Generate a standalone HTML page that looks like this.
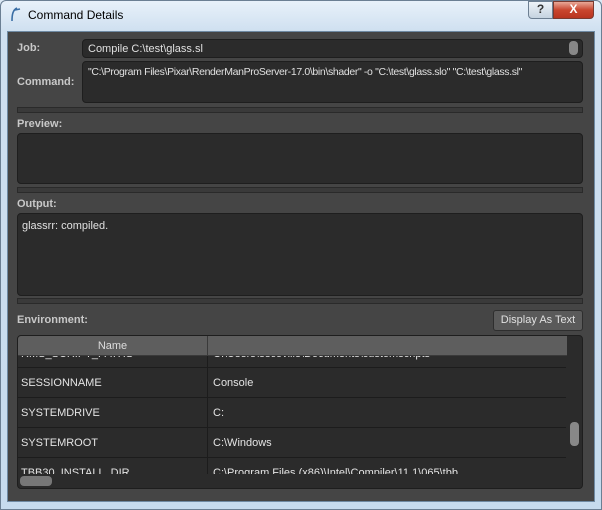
<!DOCTYPE html>
<html><head><style>
*{margin:0;padding:0;box-sizing:border-box}
body{width:602px;height:510px;overflow:hidden;background:#dce9f5;font-family:"Liberation Sans",sans-serif;font-size:11px;position:relative}
.frame{position:absolute;left:0;top:0;width:602px;height:510px;border:1px solid #6b7f93;border-radius:6px 6px 0 0;background:linear-gradient(#e8f1fa,#cfe0f0 30px,#c6dbee)}
.a{position:absolute}
.title{left:28px;top:8px;font-size:12px;color:#000}
.main{left:7px;top:31px;width:588px;height:471px;background:#454545;border:1px solid #6f8aa3}
.lbl{color:#c8c8c8;font-weight:bold;font-size:11px}
.box{background:#2b2b2b;border:1px solid #1e1e1e;border-radius:4px;color:#e0e0e0;font-size:11px;white-space:nowrap;overflow:hidden}
.spl{background:#3a3a3a;border:1px solid #2a2a2a;height:6px;left:17px;width:566px}
.row{left:0;width:548px;height:30px;border-bottom:1px solid #1c1c1c;color:#e4e4e4}
.row span{position:absolute;top:9px}
</style></head><body>
<div class="frame"></div>
<svg class="a" style="left:9px;top:6px" width="14" height="16"><path d="M3 15 C3 8 4 4 8 2 M6 4 L11 3" stroke="#3a6ea5" stroke-width="1.6" fill="none"/></svg>
<div class="a title">Command Details</div>
<div class="a" style="left:528px;top:1px;width:25px;height:18px;border:1px solid #6d7f92;border-radius:0 0 0 4px;background:linear-gradient(#eef3f8,#c5d3e0);text-align:center;font-weight:bold;font-size:12px;color:#333">?</div>
<div class="a" style="left:553px;top:1px;width:41px;height:18px;border:1px solid #7a3a30;border-radius:0 0 4px 0;background:linear-gradient(#e9a898,#c9462f 50%,#b83420);text-align:center;font-weight:bold;font-size:12px;color:#fff">X</div>
<div class="a main"></div>
<div class="a lbl" style="left:17px;top:42px">Job:</div>
<div class="a box" style="left:82px;top:39px;width:501px;height:19px;padding:3px 5px">Compile C:\test\glass.sl</div>
<div class="a" style="left:569px;top:41px;width:9px;height:14px;background:#888;border-radius:4px"></div>
<div class="a lbl" style="left:17px;top:76px">Command:</div>
<div class="a box" style="left:82px;top:61px;width:501px;height:42px;padding:4px 5px;font-size:10.5px;letter-spacing:-0.35px">"C:\Program Files\Pixar\RenderManProServer-17.0\bin\shader" -o "C:\test\glass.slo" "C:\test\glass.sl"</div>
<div class="a spl" style="top:107px"></div>
<div class="a lbl" style="left:17px;top:118px">Preview:</div>
<div class="a box" style="left:17px;top:133px;width:566px;height:51px"></div>
<div class="a spl" style="top:187px"></div>
<div class="a lbl" style="left:17px;top:198px">Output:</div>
<div class="a box" style="left:17px;top:213px;width:566px;height:83px;padding:6px 4px">glassrr: compiled.</div>
<div class="a spl" style="top:298px"></div>
<div class="a lbl" style="left:17px;top:314px">Environment:</div>
<div class="a" style="left:493px;top:310px;width:90px;height:21px;background:#5a5a5a;border:1px solid #2e2e2e;border-radius:3px;color:#e0e0e0;text-align:center;line-height:19px">Display As Text</div>
<div class="a box" style="left:17px;top:335px;width:566px;height:154px">
 <div class="a row" style="top:2px"><span style="left:3px;top:10px">RMS_SCRIPT_PATHS</span><span style="left:195px;top:10px">C:\Users\escoville\Documents\customscripts</span></div>
 <div class="a row" style="top:32px"><span style="left:3px">SESSIONNAME</span><span style="left:195px">Console</span></div>
 <div class="a row" style="top:62px"><span style="left:3px">SYSTEMDRIVE</span><span style="left:195px">C:</span></div>
 <div class="a row" style="top:92px"><span style="left:3px">SYSTEMROOT</span><span style="left:195px">C:\Windows</span></div>
 <div class="a row" style="top:122px;border:0"><span style="left:3px">TBB30_INSTALL_DIR</span><span style="left:195px">C:\Program Files (x86)\Intel\Compiler\11.1\065\tbb</span></div>
 <div class="a" style="left:189px;top:20px;width:1px;height:120px;background:#1c1c1c"></div>
 <div class="a" style="left:0;top:0;width:549px;height:20px;background:#5e5e5e;border-bottom:1px solid #3a3a3a"></div>
 <div class="a" style="left:0;top:0;width:190px;height:20px;border-right:1px solid #3a3a3a;color:#ddd;text-align:center;line-height:20px">Name</div>
 <div class="a" style="left:0;top:138px;width:566px;height:16px;background:#2b2b2b"></div>
 <div class="a" style="left:2px;top:140px;width:32px;height:10px;background:#777;border-radius:4px"></div>
 <div class="a" style="left:552px;top:86px;width:9px;height:24px;background:#888;border-radius:4px"></div>
</div>
</body></html>
